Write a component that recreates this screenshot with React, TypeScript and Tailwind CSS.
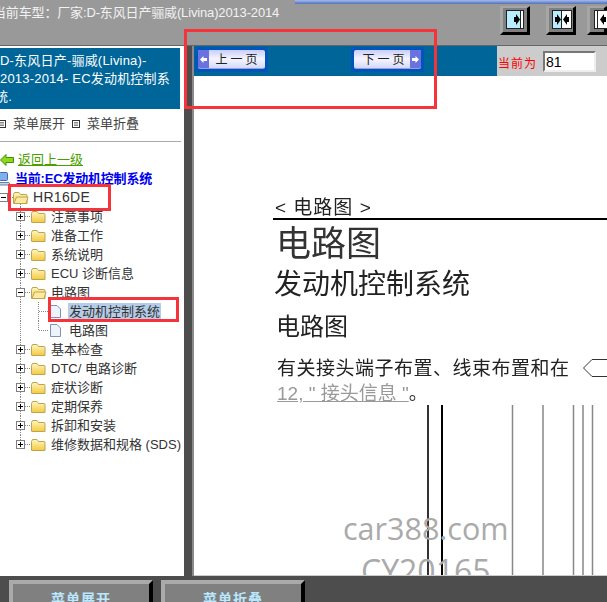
const cjk = "font-['Liberation_Sans','Noto_Sans_CJK_SC',sans-serif]";

function Folder({ x, y, open }: { x: number; y: number; open?: boolean }) {
  return (
    <g transform={`translate(${x} ${y})`}>
      <path d="M0.5 3.5 L1.5 1.5 H6 L7.5 3.5 H13 Q14 3.5 14 4.5 V12.5 H1 Q0.5 12.5 0.5 12 Z" fill="url(#folderFill)" stroke="#bda550" />
      {open && <path d="M1 12.5 L3.5 6 H15 L13 12.5 Z" fill="#ffe9a0" stroke="#bda550" />}
    </g>
  );
}

function ExpandBox({ x, y, open }: { x: number; y: number; open?: boolean }) {
  return (
    <g>
      <rect x={x + 0.5} y={y + 0.5} width="8" height="8" fill="#fff" stroke="#808080" />
      <path d={`M${x + 2} ${y + 4.5} H${x + 7}`} stroke="#000" />
      {!open && <path d={`M${x + 4.5} ${y + 2} V${y + 7}`} stroke="#000" />}
    </g>
  );
}

function Row({ label, open, last }: { label: string; open?: boolean; last?: boolean }) {
  return (
    <div className="flex h-[19px] items-center">
      <svg width="48" height="19" className="shrink-0">
        <path d={`M20.5 0 V${last ? 9 : 19}`} stroke="#888" strokeDasharray="1 1" />
        <path d="M25 9.5 H31" stroke="#888" strokeDasharray="1 1" />
        <ExpandBox x={16} y={5} open={open} />
        <Folder x={31} y={3} open={open} />
      </svg>
      <span className="ml-[3px] whitespace-nowrap text-[13px] leading-[19px] text-[#333]">{label}</span>
    </div>
  );
}

function Leaf({ label, selected, last }: { label: string; selected?: boolean; last?: boolean }) {
  return (
    <div className="flex h-[19px] items-center">
      <svg width="66" height="19" className="shrink-0">
        <path d="M20.5 0 V19" stroke="#888" strokeDasharray="1 1" />
        <path d={`M38.5 0 V${last ? 9 : 19}`} stroke="#888" strokeDasharray="1 1" />
        <path d="M39 9.5 H49" stroke="#888" strokeDasharray="1 1" />
        <path d="M50.5 3.5 H57 L60.5 7 V15.5 H50.5 Z" fill="#eef3fb" stroke="#7f93b8" />
      </svg>
      <span className={`ml-[2px] whitespace-nowrap px-px text-[13px] leading-[17px] text-[#333] ${selected ? 'bg-[#b5cde8]' : ''}`}>
        {label}
      </span>
    </div>
  );
}

function MenuGlyph() {
  return (
    <svg width="8" height="8" viewBox="0 0 8 8" className="shrink-0">
      <rect x="0.5" y="0.5" width="7" height="7" fill="#fff" stroke="#333" />
      <path d="M2 2.5 H6 M2 4 H6 M2 5.5 H6" stroke="#555" strokeWidth="0.7" />
    </svg>
  );
}

const bevel = 'box-border h-[29px] shrink-0 border-t-[2px] border-r-[3px] border-b-[3px] border-l-[3px] border-t-[#a6a6a6] border-r-black border-b-black border-l-[#a6a6a6] bg-[#808080]';

function ToolButtons() {
  return (
    <div className="absolute top-[6px] left-[500px] flex">
      <div className={`${bevel} w-[30px] pt-[2px] pl-[3px]`}>
        <svg width="18" height="19" className="block">
          <rect x="0.5" y="0.5" width="17" height="18" fill="#b8ecff" stroke="#222" />
          <rect x="15" y="1" width="2" height="17" fill="#fff" />
          <path d="M14.5 1 V18" stroke="#222" />
          <path d="M8 7 H10 V4 L14 9.5 L10 15 V12 H8 Z" fill="#000" />
        </svg>
      </div>
      <div className={`${bevel} ml-[16px] w-[30px] pt-[2px] pl-[3px]`}>
        <svg width="20" height="19" className="block">
          <rect x="0.5" y="0.5" width="19" height="18" fill="#fff" stroke="#222" />
          <rect x="1" y="1" width="8" height="17" fill="#b8ecff" />
          <path d="M9.5 1 V18" stroke="#222" />
          <path d="M3 7 H5 V4 L9 9.5 L5 15 V12 H3 Z" fill="#000" />
          <path d="M17 7 H15 V4 L11 9.5 L15 15 V12 H17 Z" fill="#000" />
        </svg>
      </div>
      <div className={`${bevel} ml-[11px] w-[20px] border-r-0 pt-[2px] pl-[4px]`}>
        <svg width="13" height="19" className="block">
          <rect x="0.5" y="0.5" width="16" height="18" fill="#fff" stroke="#222" />
          <path d="M3.5 1 V18" stroke="#222" />
          <path d="M12 7 H10 V4 L6 9.5 L10 15 V12 H12 Z" fill="#000" />
        </svg>
      </div>
    </div>
  );
}

function PageButton({ label, next }: { label: string; next?: boolean }) {
  const arrow = (
    <span className="flex w-[11px] items-center justify-center self-stretch bg-[#6a72e0]">
      <svg width="9" height="9" viewBox="0 0 9 9">
        <path d={next ? 'M1 3 H4.5 V1 L8 4.5 L4.5 8 V6 H1 Z' : 'M8 3 H4.5 V1 L1 4.5 L4.5 8 V6 H8 Z'} fill="#fff" />
      </svg>
    </span>
  );
  return (
    <div className="box-border flex h-[25px] w-[73px] items-center bg-[#0055bb] p-[3px]">
      <div className={`flex h-full w-full items-center overflow-hidden rounded-[2px] border-b border-[#9aa0d8] bg-gradient-to-b from-[#c9cdf7] via-[#f5f5ff] to-[#d5d8fa] ${next ? 'flex-row-reverse' : ''}`}>
        {arrow}
        <span className={`flex-1 pt-[2px] text-center text-[12px] tracking-[3px] text-[#222] ${next ? 'pl-[6px]' : 'pl-[2px]'}`}>{label}</span>
      </div>
    </div>
  );
}

function Marker({ className }: { className: string }) {
  return <div className={`pointer-events-none absolute border-[3px] border-[#f5333a] ${className}`} />;
}

const footerButton = 'box-border h-[40px] w-[144px] border-[4px] border-t-[#aaa] border-r-black border-l-[#aaa] border-b-black bg-[#808080] text-center text-[14px] leading-[31px] font-bold tracking-[1px] text-[#b8e8ff]';

export default function App() {
  return (
    <div className={`relative flex h-[602px] w-[607px] flex-col overflow-hidden bg-[#4d4d4d] ${cjk}`}>
      <svg width="0" height="0" className="absolute">
        <defs>
          <linearGradient id="folderFill" x1="0" y1="0" x2="0" y2="1">
            <stop offset="0" stopColor="#fff6c0" />
            <stop offset="1" stopColor="#f4c93f" />
          </linearGradient>
        </defs>
      </svg>

      {/* top bar */}
      <header className="relative flex h-[46px] shrink-0 border-b border-[#666] bg-[#999]">
        <div className="absolute top-0 right-0 h-[4px] w-[312px] bg-gradient-to-b from-[#a9bce8] to-[#4f6fc0]" />
        <div className="-ml-[7px] pt-[4px] text-[13px] leading-[18px] tracking-[-0.15px] whitespace-nowrap text-[#f2f2f2]">当前车型：厂家:D-东风日产骊威(Livina)2013-2014</div>
        <ToolButtons />
      </header>

      <main className="flex min-h-0 flex-1">
        {/* left tree */}
        <aside className="flex w-[184px] shrink-0 flex-col overflow-hidden bg-white pt-[2px]">
          <div className="h-[61px] w-[180px] bg-[#006699] pt-[4px] text-[13px] leading-[18px] tracking-[0.2px] whitespace-nowrap text-white">
            D-东风日产-骊威(Livina)-<br />2013-2014- EC发动机控制系<br /><span className="-ml-[5px]">统.</span>
          </div>
          <div className="flex h-[32px] w-[181px] items-center pb-[3px] text-[13px] text-[#444]">
            <span className="-ml-[2px]"><MenuGlyph /></span>
            <span className="ml-[7px]">菜单展开</span>
            <span className="mx-[7px]"><MenuGlyph /></span>
            <span>菜单折叠</span>
          </div>
          <div className="h-px w-[181px] bg-[#aaa]" />
          <div className="mt-[8px] flex h-[19px] items-center">
            <svg width="14" height="12" viewBox="0 0 14 12" className="shrink-0">
              <path d="M0.5 6 L6 0.5 V3.5 H13.5 V8.5 H6 V11.5 Z" fill="#8ed81f" stroke="#3f8f00" />
            </svg>
            <span className="ml-[4px] text-[13px] text-[#4aa000] underline">返回上一级</span>
          </div>
          <div className="flex h-[19px] items-center">
            <svg width="14" height="15" viewBox="0 0 14 15" className="-ml-[3px] shrink-0">
              <rect x="2.5" y="1.5" width="8" height="8" rx="1" fill="#7fb0ec" stroke="#4468a8" />
              <path d="M1 11.5 H12 L13 14 H0 Z" fill="#c8d4e8" stroke="#6a7fa8" />
            </svg>
            <span className="ml-[4px] whitespace-nowrap text-[13px] font-bold tracking-[-0.2px] text-[#0000f0]">当前:EC发动机控制系统</span>
          </div>
          <div className="flex h-[19px] items-center">
            <svg width="30" height="19" className="shrink-0">
              <path d="M8 9.5 H13" stroke="#888" strokeDasharray="1 1" />
              <path d="M20.5 14 V19" stroke="#888" strokeDasharray="1 1" />
              <ExpandBox x={-1} y={5} open />
              <Folder x={13} y={3} open />
            </svg>
            <span className="ml-[3px] text-[14px] tracking-[0.3px] text-[#333]">HR16DE</span>
          </div>
          <Row label="注意事项" />
          <Row label="准备工作" />
          <Row label="系统说明" />
          <Row label="ECU 诊断信息" />
          <Row label="电路图" open />
          <Leaf label="发动机控制系统" selected />
          <Leaf label="电路图" last />
          <Row label="基本检查" />
          <Row label="DTC/ 电路诊断" />
          <Row label="症状诊断" />
          <Row label="定期保养" />
          <Row label="拆卸和安装" />
          <Row label="维修数据和规格 (SDS)" last />
        </aside>

        {/* splitter */}
        <div className="w-[10px] shrink-0 border-r-2 border-r-[#8a8a8a] bg-[#4d4d4d]" />

        {/* document */}
        <section className="relative flex min-w-0 flex-1 flex-col overflow-hidden bg-white">
          <div className="flex h-[30px] shrink-0">
            <div className="flex w-[303px] items-start justify-between bg-[#006699] pt-[1px] pr-[73px] pl-px">
              <PageButton label="上一页" />
              <PageButton label="下一页" next />
            </div>
            <div className="flex flex-1 items-center bg-[#ccc] pl-px">
              <span className="pt-[5px] text-[12px] tracking-[1px] text-[#f00]">当前为</span>
              <span className="ml-[6px] box-border block h-[21px] w-[53px] border-2 border-t-[#777] border-r-[#eee] border-b-[#eee] border-l-[#777] bg-white pl-[1px] text-[14px] leading-[18px] text-black">81</span>
            </div>
          </div>

          <div className="pt-[121px] pl-[79px] text-[#333]">
            <div className="blur-[0.3px]">
              <div className="border-b-2 border-black pt-px pl-[2px] text-[19px] leading-[20px] tracking-[1px] text-[#222]">&lt; 电路图 &gt;</div>
              <div className="mt-[3px] ml-[3px] text-[35px] leading-[42px]">电路图</div>
              <div className="mt-[3px] ml-px text-[28px] leading-[34px] text-[#222]">发动机控制系统</div>
              <div className="mt-[10px] ml-[3px] text-[24px] leading-[30px] text-[#222]">电路图</div>
              <div className="relative mt-[14px] ml-[4px] whitespace-nowrap text-[19px] leading-[25px] tracking-[0.5px] text-[#222]">
                有关接头端子布置、线束布置和在
                <svg width="30" height="18" className="absolute top-[3px] left-[306px]">
                  <path d="M0.5 9 L9 0.5 H30 M0.5 9 L9 17.5 H30" fill="none" stroke="#333" />
                </svg>
              </div>
              <div className="ml-[4px] whitespace-nowrap text-[19px] leading-[25px] text-[#999]">
                <span className="underline">12, " 接头信息 "</span><span className="text-[#333]">。</span>
              </div>
            </div>
            <svg width="334" height="170" className="-mt-px block">
              <path d="M155 0 V170" stroke="#333" strokeWidth="2" />
              <path d="M169 0 V170" stroke="#000" strokeWidth="2" />
              <path d="M239.5 0 V170 M270 0 V170 M300.5 0 V170 M310 0 V170 M319.5 0 V170" stroke="#888" strokeWidth="1.5" />
            </svg>
          </div>

          <div className="absolute top-[462px] left-[149px] font-['Open_Sans',sans-serif] text-[30.5px] leading-[40px] text-[#aaa]">car388.com</div>
          <div className="absolute top-[505px] left-[167px] font-['Open_Sans',sans-serif] text-[32px] leading-[40px] text-[#aaa]">CY20165</div>
          <div className="absolute right-0 bottom-0 left-0 h-px bg-[#ccc]" />
        </section>
      </main>

      {/* bottom bar */}
      <footer className="flex h-[26px] shrink-0 gap-[8px] pt-[4px] pl-[9px]">
        <div className={footerButton}>菜单展开</div>
        <div className={footerButton}>菜单折叠</div>
      </footer>

      <Marker className="top-[29px] left-[184px] h-[80px] w-[253px]" />
      <Marker className="top-[184px] left-[8px] h-[27px] w-[103px]" />
      <Marker className="top-[297px] left-[48px] h-[25px] w-[131px]" />
    </div>
  );
}
